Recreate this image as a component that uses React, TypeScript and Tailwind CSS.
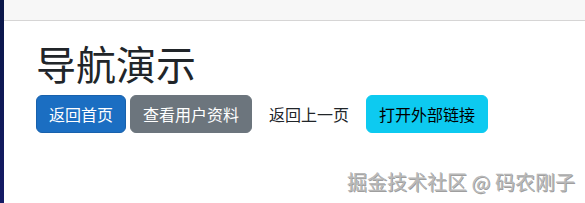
import React from 'react'

const font = { fontFamily: '"Noto Sans CJK SC", "Liberation Sans", sans-serif' }

export default function App() {
  return (
    <div className="relative flex h-[203px] w-[585px] overflow-hidden bg-white text-[#212529]" style={font}>
      {/* Sidebar sliver */}
      <div className="w-[4px] shrink-0 bg-gradient-to-b from-[#0a1748] to-[#151b66]" />

      <main className="flex flex-1 flex-col">
        {/* Top row */}
        <div className="h-[21px] border-b border-[#d6d5d5] bg-[#f7f7f7]" />

        <article className="px-[32px] pt-[18px]">
          <h1 className="mb-2 text-[40px] font-normal leading-[48px]">导航演示</h1>
          <div className="flex items-center gap-[4px]">
            <button className="rounded-[6px] border border-[#1861ac] bg-[#1b6ec2] px-3 py-[6px] text-base leading-6 text-white">
              返回首页
            </button>
            <button className="rounded-[6px] border border-[#6c757d] bg-[#6c757d] px-3 py-[6px] text-base leading-6 text-white">
              查看用户资料
            </button>
            <button className="rounded-[6px] border border-transparent bg-transparent px-3 py-[6px] text-base leading-6 text-[#212529]">
              返回上一页
            </button>
            <button className="rounded-[6px] border border-[#0dcaf0] bg-[#0dcaf0] px-3 py-[6px] text-base leading-6 text-black">
              打开外部链接
            </button>
          </div>
        </article>
      </main>

      {/* Watermark */}
      <div className="pointer-events-none absolute bottom-[8px] right-[10px] text-[20px] leading-[26px] text-[#b8b8b8] [text-shadow:1px_1px_0_rgba(0,0,0,0.4)]">
        掘金技术社区 @ 码农刚子
      </div>
    </div>
  )
}
